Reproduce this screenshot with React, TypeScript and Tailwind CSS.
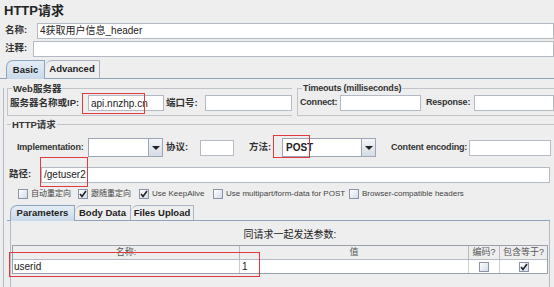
import React from 'react'

const font = { fontFamily: '"Liberation Sans", "Noto Sans CJK SC", sans-serif' }

function Label({ w, children, className = '', latin }: { w: string; children: React.ReactNode; className?: string; latin?: boolean }) {
  return (
    <span className={`shrink-0 whitespace-nowrap font-bold text-[#333] ${latin ? 'text-[9px] tracking-[-0.2px]' : 'text-[9.5px]'} ${w} ${className}`}>
      {children}
    </span>
  )
}

function Field({ w, children, className = '' }: { w?: string; children?: React.ReactNode; className?: string }) {
  return (
    <div className={`h-[16px] bg-white border border-[#b4b9c6] flex items-center px-[2px] text-[10px] text-[#222] whitespace-nowrap overflow-hidden ${w ? `${w} shrink-0` : 'flex-1 min-w-0'} ${className}`}>
      {children}
    </div>
  )
}

function Combo({ w, value }: { w: string; value?: string }) {
  return (
    <div className={`h-[19px] shrink-0 flex border border-[#9ea6b6] bg-white ${w}`}>
      <div className="flex-1 flex items-center px-[3px] text-[10px] font-bold text-[#222]">{value}</div>
      <div className="w-[14px] border-l border-[#9ea6b6] bg-gradient-to-b from-[#f4f6f9] to-[#d5dce6] flex items-center justify-center">
        <div className="w-0 h-0 border-l-[4px] border-r-[4px] border-t-[4px] border-l-transparent border-r-transparent border-t-[#222]" />
      </div>
    </div>
  )
}

function Check({ on }: { on?: boolean }) {
  return (
    <div className="w-[10px] h-[10px] shrink-0 border border-[#8a94a6] bg-gradient-to-br from-white to-[#d2dbe7] flex items-center justify-center">
      {on && (
        <svg width="8" height="8" viewBox="0 0 8 8">
          <path d="M1 4 L3 6.5 L7 1" stroke="#222" strokeWidth="1.6" fill="none" />
        </svg>
      )}
    </div>
  )
}

function Legend({ children, latin }: { children: React.ReactNode; latin?: boolean }) {
  return (
    <span className={`absolute -top-[7px] left-[4px] bg-[#eeeeee] px-[1px] font-bold text-[#333] leading-[13px] whitespace-nowrap ${latin ? 'text-[9px] tracking-[-0.2px]' : 'text-[9.5px]'}`}>
      {children}
    </span>
  )
}

function Tab({ w, h, active, first, children }: { w: string; h: string; active?: boolean; first?: boolean; children: React.ReactNode }) {
  return (
    <div
      className={`${w} ${h} shrink-0 whitespace-nowrap border border-b-0 rounded-tl-[7px] flex items-center justify-center text-[9.5px] font-bold ${
        active ? '-mb-px border-[#8fa5bd] bg-gradient-to-b from-[#e4edf6] to-[#c9d9ea]' : 'border-[#a8b4c2] bg-[#eeeeee]'
      } ${first ? '' : 'border-l-0'}`}
    >
      {children}
    </div>
  )
}

export default function App() {
  return (
    <div className="relative w-[554px] h-[287px] overflow-hidden bg-[#eeeeee] text-[#222]" style={font}>
      <div className="h-[21px] pl-[4px] pt-[3px] text-[13px] font-bold leading-[16px]">HTTP请求</div>

      <div className="flex items-center h-[17px] mt-[1px]">
        <Label w="w-[37px]" className="pl-[5px]">名称:</Label>
        <Field>4获取用户信息_header</Field>
      </div>
      <div className="flex items-center h-[17px] mt-[1px]">
        <Label w="w-[33px]" className="pl-[5px]">注释:</Label>
        <Field />
      </div>

      {/* main tabs */}
      <div className="flex items-end h-[22px] pl-[6px] border-b border-[#8fa5bd]">
        <Tab w="w-[39px]" h="h-[19px]" active first>Basic</Tab>
        <Tab w="w-[55px]" h="h-[18px]">Advanced</Tab>
      </div>

      <div className="border-l border-[#b4b9c6] ml-[3px] pl-[3px] h-[210px]">
        {/* server & timeouts */}
        <div className="flex gap-[5px] mt-[9px] h-[28px]">
          <div className="relative w-[285px] shrink-0 border border-r-0 border-[#c2c4ca] flex items-center pl-[2px] pt-[2px]">
            <Legend>Web服务器</Legend>
            <Label w="w-[78px]">服务器名称或IP:</Label>
            <Field w="w-[76px]">api.nnzhp.cn</Field>
            <Label w="w-[41px]" className="pl-[2px]">端口号:</Label>
            <Field />
          </div>
          <div className="relative flex-1 border border-r-0 border-[#c2c4ca] flex items-center pl-[2px] pt-[2px]">
            <Legend latin>Timeouts (milliseconds)</Legend>
            <Label latin w="w-[40px]">Connect:</Label>
            <Field w="w-[81px]" />
            <Label latin w="w-[53px]" className="pl-[5px]">Response:</Label>
            <Field />
          </div>
        </div>

        {/* HTTP request fieldset */}
        <div className="relative mt-[8px] border-t border-[#c2c4ca] h-[170px]">
          <Legend>HTTP请求</Legend>
          <div className="flex items-center h-[19px] mt-[13px] pl-[10px]">
            <Label latin w="w-[71px]">Implementation:</Label>
            <Combo w="w-[75px]" />
            <Label w="w-[37px]" className="pl-[3px]">协议:</Label>
            <Field w="w-[34px]" />
            <Label w="w-[48px]" className="pl-[15px]">方法:</Label>
            <Combo w="w-[94px]" value="POST" />
            <Label latin w="w-[93px]" className="pl-[15px]">Content encoding:</Label>
            <Field w="w-[82px]" />
          </div>

          <div className="flex items-center h-[17px] mt-[9px] pl-[2px]">
            <Label w="w-[32px]">路径:</Label>
            <Field className="mr-[4px]">/getuser2</Field>
          </div>

          <div className="flex items-center h-[12px] mt-[5px] pl-[11px] text-[8px] text-[#444] gap-[3px] whitespace-nowrap">
            <Check />
            <span className="w-[44px] shrink-0">自动重定向</span>
            <Check on />
            <span className="w-[45px] shrink-0">跟随重定向</span>
            <Check on />
            <span className="w-[58px] shrink-0">Use KeepAlive</span>
            <Check />
            <span className="w-[120px] shrink-0">Use multipart/form-data for POST</span>
            <Check />
            <span>Browser-compatible headers</span>
          </div>

          {/* sub tabs */}
          <div className="flex items-end h-[16px] mt-[5px] pl-[3px] border-b border-[#8fa5bd] mr-[4px]">
            <Tab w="w-[65px]" h="h-[16px]" active first>Parameters</Tab>
            <Tab w="w-[56px]" h="h-[15px]">Body Data</Tab>
            <Tab w="w-[63px]" h="h-[15px]">Files Upload</Tab>
          </div>

          <div className="ml-[3px] mr-[4px] border-l border-r border-[#b4b9c6] h-[70px] pt-[7px]">
            <div className="text-center text-[10px] leading-[14px] pl-[20px]">同请求一起发送参数:</div>
            <div className="mt-[3px] mx-px border border-[#9aa0ab]">
              <div className="flex h-[13px] text-[9px] text-[#555] leading-[13px] bg-[#eeeeee]">
                <div className="w-[227px] border-r border-[#b4b9c6] text-center">名称:</div>
                <div className="w-[229px] border-r border-[#b4b9c6] text-center">值</div>
                <div className="w-[31px] border-r border-[#b4b9c6] text-center whitespace-nowrap">编码?</div>
                <div className="flex-1 text-center whitespace-nowrap">包含等于?</div>
              </div>
              <div className="flex h-[14px] text-[10px] leading-[13px] bg-white border-t border-[#b4b9c6]">
                <div className="w-[227px] border-r border-[#c8ccd4] pl-[1px]">userid</div>
                <div className="w-[229px] border-r border-[#c8ccd4] pl-[2px]">1</div>
                <div className="w-[31px] border-r border-[#c8ccd4] flex items-center justify-center"><Check /></div>
                <div className="flex-1 flex items-center justify-center"><Check on /></div>
              </div>
            </div>
          </div>
        </div>
      </div>

      {/* red annotation boxes */}
      <div className="absolute left-[82px] top-[93px] w-[63px] h-[21px] border border-[#e0393e]" />
      <div className="absolute left-[273px] top-[135px] w-[37px] h-[23px] border border-[#e0393e]" />
      <div className="absolute left-[40px] top-[157px] w-[48px] h-[30px] border border-[#e0393e]" />
      <div className="absolute left-[9px] top-[252px] w-[251px] h-[25px] border border-[#e0393e]" />
    </div>
  )
}
